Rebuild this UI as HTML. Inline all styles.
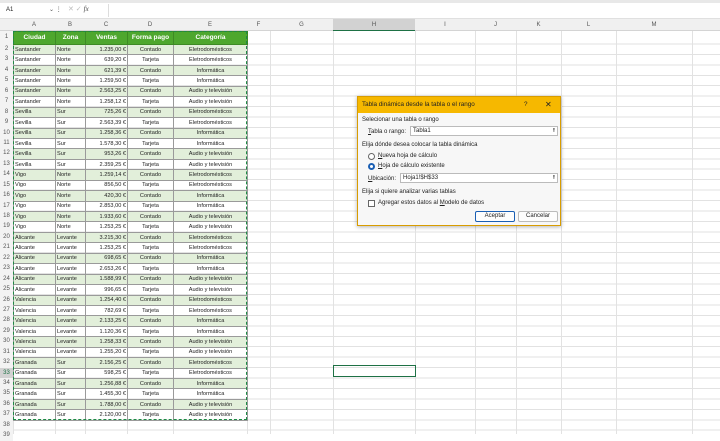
<!DOCTYPE html><html><head><meta charset="utf-8"><style>
*{margin:0;padding:0;box-sizing:border-box}
body{width:720px;height:434px;overflow:hidden;background:#fff;font-family:"Liberation Sans",sans-serif;position:relative;font-size:6px;color:#222}
.grid{position:absolute;left:13px;top:31px;width:707px;height:403px;
background-image:repeating-linear-gradient(to bottom,transparent 0,transparent 9.44px,#e2e2e2 9.44px,#e2e2e2 10.44px);background-position:0 3px}
.vl{position:absolute;top:19px;width:1px;height:415px;background:#e2e2e2}
.ch{position:absolute;top:19px;height:12px;background:#f0f0f0;border-bottom:1px solid #d4d4d4;color:#555;font-size:6px;text-align:center;line-height:12px}
.rn{position:absolute;left:0;width:13px;color:#555;font-size:6px;text-align:center;background:#f3f3f3}
table{position:absolute;left:13px;top:31px;border-collapse:collapse;table-layout:fixed;width:234px}
td{border:1px solid #9a9a9a;height:10.44px;font-size:5.6px;line-height:8px;padding:0 1px;white-space:nowrap;overflow:hidden}
tr.h td{height:13px;background:#4ea72e;color:#fff;font-weight:bold;font-size:6.5px;text-align:center;border-color:#3d8a24}
tr:nth-child(even) td{background:#e2efda}
td:nth-child(3){text-align:right}td:nth-child(4),td:nth-child(5){text-align:center}
.dlg{position:absolute;left:357px;top:96px;width:204px;height:130px;background:#f7f7f7;border:1px solid #d89c00;box-shadow:0 1px 4px rgba(0,0,0,.3);font-size:6px}
.tb{height:16px;background:#f6b800;line-height:16px;padding-left:4px;font-size:6.3px;color:#222}
.in{position:absolute;background:#fff;border:1px solid #bbb;height:10px;line-height:8px;padding-left:2px}
.btn{position:absolute;height:11px;width:40px;border:1px solid #bbb;background:#fdfdfd;text-align:center;line-height:9px;border-radius:2px}
</style></head><body>
<div style="position:absolute;left:0;top:0;width:720px;height:3px;background:#e8e8e8"></div>
<div style="position:absolute;left:0;top:3px;width:720px;height:16px;background:#fff;border-bottom:1px solid #e0e0e0"></div>
<div style="position:absolute;left:6px;top:7px;font-size:6px">A1</div>
<div style="position:absolute;left:49px;top:6px;font-size:6px;color:#555">⌄ ⋮</div>
<div style="position:absolute;left:68px;top:5px;width:40px;height:12px;font-size:7px;color:#bbb">✕ ✓ <i style="color:#444;font-family:'Liberation Serif',serif">fx</i></div>
<div style="position:absolute;left:108px;top:4px;width:612px;height:13px;border-left:1px solid #ddd"></div>
<div class="grid"></div>
<div class="vl" style="left:13px"></div><div class="vl" style="left:55px"></div><div class="vl" style="left:85px"></div><div class="vl" style="left:127px"></div><div class="vl" style="left:173px"></div><div class="vl" style="left:247px"></div><div class="vl" style="left:270px"></div><div class="vl" style="left:333px"></div><div class="vl" style="left:415px"></div><div class="vl" style="left:475px"></div><div class="vl" style="left:516px"></div><div class="vl" style="left:561px"></div><div class="vl" style="left:616px"></div><div class="vl" style="left:692px"></div>
<div class="ch" style="left:0;width:13px"></div>
<div class="ch" style="left:13px;width:42px">A</div><div class="ch" style="left:55px;width:30px">B</div><div class="ch" style="left:85px;width:42px">C</div><div class="ch" style="left:127px;width:46px">D</div><div class="ch" style="left:173px;width:74px">E</div><div class="ch" style="left:247px;width:23px">F</div><div class="ch" style="left:270px;width:63px">G</div><div class="ch" style="left:333px;width:82px;background:#d2d2d2;border-bottom:1px solid #1e7145">H</div><div class="ch" style="left:415px;width:60px">I</div><div class="ch" style="left:475px;width:41px">J</div><div class="ch" style="left:516px;width:45px">K</div><div class="ch" style="left:561px;width:55px">L</div><div class="ch" style="left:616px;width:76px">M</div><div class="ch" style="left:692px;width:28px"></div>
<div style="position:absolute;left:0;top:31px;width:13px">
<div class="rn" style="position:relative;height:13px;line-height:13px">1</div>
<div class="rn" style="position:relative;height:10.44px;line-height:10px">2</div><div class="rn" style="position:relative;height:10.44px;line-height:10px">3</div><div class="rn" style="position:relative;height:10.44px;line-height:10px">4</div><div class="rn" style="position:relative;height:10.44px;line-height:10px">5</div><div class="rn" style="position:relative;height:10.44px;line-height:10px">6</div><div class="rn" style="position:relative;height:10.44px;line-height:10px">7</div><div class="rn" style="position:relative;height:10.44px;line-height:10px">8</div><div class="rn" style="position:relative;height:10.44px;line-height:10px">9</div><div class="rn" style="position:relative;height:10.44px;line-height:10px">10</div><div class="rn" style="position:relative;height:10.44px;line-height:10px">11</div><div class="rn" style="position:relative;height:10.44px;line-height:10px">12</div><div class="rn" style="position:relative;height:10.44px;line-height:10px">13</div><div class="rn" style="position:relative;height:10.44px;line-height:10px">14</div><div class="rn" style="position:relative;height:10.44px;line-height:10px">15</div><div class="rn" style="position:relative;height:10.44px;line-height:10px">16</div><div class="rn" style="position:relative;height:10.44px;line-height:10px">17</div><div class="rn" style="position:relative;height:10.44px;line-height:10px">18</div><div class="rn" style="position:relative;height:10.44px;line-height:10px">19</div><div class="rn" style="position:relative;height:10.44px;line-height:10px">20</div><div class="rn" style="position:relative;height:10.44px;line-height:10px">21</div><div class="rn" style="position:relative;height:10.44px;line-height:10px">22</div><div class="rn" style="position:relative;height:10.44px;line-height:10px">23</div><div class="rn" style="position:relative;height:10.44px;line-height:10px">24</div><div class="rn" style="position:relative;height:10.44px;line-height:10px">25</div><div class="rn" style="position:relative;height:10.44px;line-height:10px">26</div><div class="rn" style="position:relative;height:10.44px;line-height:10px">27</div><div class="rn" style="position:relative;height:10.44px;line-height:10px">28</div><div class="rn" style="position:relative;height:10.44px;line-height:10px">29</div><div class="rn" style="position:relative;height:10.44px;line-height:10px">30</div><div class="rn" style="position:relative;height:10.44px;line-height:10px">31</div><div class="rn" style="position:relative;height:10.44px;line-height:10px">32</div><div class="rn" style="position:relative;height:10.44px;line-height:10px;background:#d2d2d2;color:#1e7145">33</div><div class="rn" style="position:relative;height:10.44px;line-height:10px">34</div><div class="rn" style="position:relative;height:10.44px;line-height:10px">35</div><div class="rn" style="position:relative;height:10.44px;line-height:10px">36</div><div class="rn" style="position:relative;height:10.44px;line-height:10px">37</div><div class="rn" style="position:relative;height:10.44px;line-height:10px">38</div><div class="rn" style="position:relative;height:10.44px;line-height:10px">39</div>
</div>
<table><colgroup><col style="width:42px"><col style="width:30px"><col style="width:42px"><col style="width:46px"><col style="width:74px"></colgroup>
<tr class="h"><td>Ciudad</td><td>Zona</td><td style="text-align:center">Ventas</td><td>Forma pago</td><td>Categoría</td></tr>
<tr><td>Santander</td><td>Norte</td><td>1.235,00 €</td><td>Contado</td><td>Eletrodomésticos</td></tr>
<tr><td>Santander</td><td>Norte</td><td>639,20 €</td><td>Tarjeta</td><td>Eletrodomésticos</td></tr>
<tr><td>Santander</td><td>Norte</td><td>621,39 €</td><td>Contado</td><td>Informática</td></tr>
<tr><td>Santander</td><td>Norte</td><td>1.259,50 €</td><td>Tarjeta</td><td>Informática</td></tr>
<tr><td>Santander</td><td>Norte</td><td>2.563,25 €</td><td>Contado</td><td>Audio y televisión</td></tr>
<tr><td>Santander</td><td>Norte</td><td>1.258,12 €</td><td>Tarjeta</td><td>Audio y televisión</td></tr>
<tr><td>Sevilla</td><td>Sur</td><td>725,26 €</td><td>Contado</td><td>Eletrodomésticos</td></tr>
<tr><td>Sevilla</td><td>Sur</td><td>2.563,39 €</td><td>Tarjeta</td><td>Eletrodomésticos</td></tr>
<tr><td>Sevilla</td><td>Sur</td><td>1.258,36 €</td><td>Contado</td><td>Informática</td></tr>
<tr><td>Sevilla</td><td>Sur</td><td>1.578,30 €</td><td>Tarjeta</td><td>Informática</td></tr>
<tr><td>Sevilla</td><td>Sur</td><td>953,26 €</td><td>Contado</td><td>Audio y televisión</td></tr>
<tr><td>Sevilla</td><td>Sur</td><td>2.359,25 €</td><td>Tarjeta</td><td>Audio y televisión</td></tr>
<tr><td>Vigo</td><td>Norte</td><td>1.259,14 €</td><td>Contado</td><td>Eletrodomésticos</td></tr>
<tr><td>Vigo</td><td>Norte</td><td>856,50 €</td><td>Tarjeta</td><td>Eletrodomésticos</td></tr>
<tr><td>Vigo</td><td>Norte</td><td>420,30 €</td><td>Contado</td><td>Informática</td></tr>
<tr><td>Vigo</td><td>Norte</td><td>2.853,00 €</td><td>Tarjeta</td><td>Informática</td></tr>
<tr><td>Vigo</td><td>Norte</td><td>1.933,60 €</td><td>Contado</td><td>Audio y televisión</td></tr>
<tr><td>Vigo</td><td>Norte</td><td>1.253,25 €</td><td>Tarjeta</td><td>Audio y televisión</td></tr>
<tr><td>Alicante</td><td>Levante</td><td>3.215,30 €</td><td>Contado</td><td>Eletrodomésticos</td></tr>
<tr><td>Alicante</td><td>Levante</td><td>1.253,25 €</td><td>Tarjeta</td><td>Eletrodomésticos</td></tr>
<tr><td>Alicante</td><td>Levante</td><td>698,65 €</td><td>Contado</td><td>Informática</td></tr>
<tr><td>Alicante</td><td>Levante</td><td>2.653,26 €</td><td>Tarjeta</td><td>Informática</td></tr>
<tr><td>Alicante</td><td>Levante</td><td>1.588,99 €</td><td>Contado</td><td>Audio y televisión</td></tr>
<tr><td>Alicante</td><td>Levante</td><td>996,65 €</td><td>Tarjeta</td><td>Audio y televisión</td></tr>
<tr><td>Valencia</td><td>Levante</td><td>1.254,40 €</td><td>Contado</td><td>Eletrodomésticos</td></tr>
<tr><td>Valencia</td><td>Levante</td><td>782,69 €</td><td>Tarjeta</td><td>Eletrodomésticos</td></tr>
<tr><td>Valencia</td><td>Levante</td><td>2.133,25 €</td><td>Contado</td><td>Informática</td></tr>
<tr><td>Valencia</td><td>Levante</td><td>1.120,36 €</td><td>Tarjeta</td><td>Informática</td></tr>
<tr><td>Valencia</td><td>Levante</td><td>1.258,33 €</td><td>Contado</td><td>Audio y televisión</td></tr>
<tr><td>Valencia</td><td>Levante</td><td>1.255,20 €</td><td>Tarjeta</td><td>Audio y televisión</td></tr>
<tr><td>Granada</td><td>Sur</td><td>2.156,25 €</td><td>Contado</td><td>Eletrodomésticos</td></tr>
<tr><td>Granada</td><td>Sur</td><td>598,25 €</td><td>Tarjeta</td><td>Eletrodomésticos</td></tr>
<tr><td>Granada</td><td>Sur</td><td>1.256,88 €</td><td>Contado</td><td>Informática</td></tr>
<tr><td>Granada</td><td>Sur</td><td>1.455,30 €</td><td>Tarjeta</td><td>Informática</td></tr>
<tr><td>Granada</td><td>Sur</td><td>1.788,00 €</td><td>Contado</td><td>Audio y televisión</td></tr>
<tr><td>Granada</td><td>Sur</td><td>2.120,00 €</td><td>Tarjeta</td><td>Audio y televisión</td></tr>
</table>
<div style="position:absolute;left:13px;top:31px;width:234px;height:389px;border:1.5px dashed #1e8a45"></div>
<div style="position:absolute;left:333px;top:365px;width:83px;height:12px;border:1.5px solid #1e7145"></div>
<div class="dlg">
<div class="tb">Tabla dinámica desde la tabla o el rango<span style="position:absolute;left:166px">?</span><span style="position:absolute;left:187px;font-size:8px">✕</span></div>
<div style="position:absolute;left:4px;top:20px">Selecionar una tabla o rango</div>
<div style="position:absolute;left:10px;top:32px"><u>T</u>abla o rango:</div>
<div class="in" style="left:52px;top:29px;width:148px">Tabla1<span style="position:absolute;right:2px">⭱</span></div>
<div style="position:absolute;left:4px;top:45px">Elija dónde desea colocar la tabla dinámica</div>
<div style="position:absolute;left:10px;top:56px;width:7px;height:7px;border:1px solid #666;border-radius:50%;background:#fff"></div>
<div style="position:absolute;left:20px;top:56px"><u>N</u>ueva hoja de cálculo</div>
<div style="position:absolute;left:10px;top:66px;width:7px;height:7px;border:2px solid #1a5fb4;border-radius:50%;background:#fff"></div>
<div style="position:absolute;left:20px;top:66px"><u>H</u>oja de cálculo existente</div>
<div style="position:absolute;left:10px;top:79px"><u>U</u>bicación:</div>
<div class="in" style="left:42px;top:76px;width:158px">Hoja1!$H$33<span style="position:absolute;right:2px">⭱</span></div>
<div style="position:absolute;left:4px;top:92px">Elija si quiere analizar varias tablas</div>
<div style="position:absolute;left:10px;top:103px;width:7px;height:7px;border:1px solid #666;background:#fff"></div>
<div style="position:absolute;left:20px;top:103px">Agregar estos datos al <u>M</u>odelo de datos</div>
<div class="btn" style="left:117px;top:114px;border-color:#1a5fb4">Aceptar</div>
<div class="btn" style="left:160px;top:114px">Cancelar</div>
</div>
</body></html>
